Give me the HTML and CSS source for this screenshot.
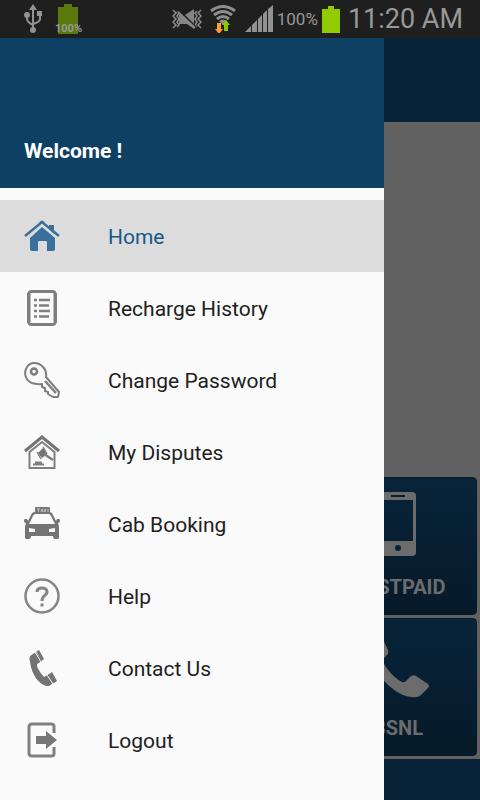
FILE: index.html
```html
<!DOCTYPE html>
<html lang="en">
<head>
<meta charset="utf-8">
<meta name="viewport" content="width=device-width, initial-scale=1">
<title>Home</title>
<link rel="stylesheet" href="styles.css">
</head>
<body>
<div class="screen">
  <div class="status">
    <svg class="usb" width="20" height="32" viewBox="0 0 20 32" fill="none" stroke="#929292" stroke-width="2">
      <path d="M10 6v21M4 13v3q0 3 6 6M17 11v5q0 3-7 5"/>
      <path d="M10 1l4 6H6zM14 8h5v5h-5z" fill="#929292" stroke="none"/>
      <circle cx="4" cy="12" r="3" fill="#929292" stroke="none"/><circle cx="10" cy="27" r="3" fill="#929292" stroke="none"/>
    </svg>
    <span class="charge">
      <svg width="20" height="30" viewBox="0 0 20 30"><path d="M6 0h8v3h6v27H0V3h6z" fill="#5a7a0c"/></svg>
      <span class="charge-label">100%</span>
    </span>
    <svg class="mute" width="32" height="24" viewBox="0 0 32 24" fill="none" stroke="#8a8a8a" stroke-width="2">
      <path d="M2 3l3 3-3 3 3 3-3 3 3 3-3 3M6 4l2 2-2 3 2 3-2 3 2 3-2 2M30 3l-3 3 3 3-3 3 3 3-3 3 3 3M26 4l-2 2 2 3-2 3 2 3-2 3 2 2" stroke-width="1.5"/>
      <path d="M8 8h6l9-6v20l-7-5H8z" fill="#858585" stroke="none"/>
      <path d="M6 2l19 19" stroke="#1f1f1f" stroke-width="3"/><path d="M7 5l17 16"/>
    </svg>
    <svg class="wifi" width="26" height="28" viewBox="0 0 26 28">
      <g fill="none" stroke="#8e8e8e" stroke-width="3"><path d="M1 6q12-9 24 0M4 10q9-7 18 0M7 14q6-5 12 0"/></g>
      <path d="M9 16q4-3 8 0l-4 4z" fill="#8e8e8e"/>
      <path d="M7 18h4v6h2l-4 5-4-5h2z" fill="#ff9c33"/>
      <path d="M14 26v-6h-2l4-5 4 5h-2v6z" fill="#8cc800"/>
    </svg>
    <svg class="signal" width="28" height="28" viewBox="0 0 28 28"><path d="M0 27l6-6v6zM7 20l5-5v12H7zM13 14l4-4v17h-4zM18 9l4-4v22h-4zM23 4l5-4v27h-5z" fill="#929292"/></svg>
    <span class="percent">100%</span>
    <svg class="battery" width="18" height="27" viewBox="0 0 18 27"><path d="M6 0h6v3h6v24H0V3h6z" fill="#90cc00"/></svg>
    <time class="clock">11:20 AM</time>
  </div>
  <div class="stage">
    <main class="page">
      <div class="toolbar"></div>
      <div class="banner"></div>
      <div class="tiles">
        <button class="tile" type="button">
          <svg width="36" height="66" viewBox="0 0 36 66"><path fill-rule="evenodd" d="M4 0h28q4 0 4 4v56q0 4-4 4H4q-4 0-4-4V4q0-4 4-4zM3 8v41h30V8z" fill="#6c6c6c"/><path d="M11 3h14v2H11z" fill="#082338"/><circle cx="18" cy="56" r="3" fill="#082338"/></svg>
          <span>POSTPAID</span>
        </button>
        <button class="tile" type="button">
          <svg width="64" height="66" viewBox="0 0 64 66"><path d="M3 9L10 2q3-3 5 0l7 15q1 3-1 5l-4 4q-1 2 1 5 8 13 18 18 2 1 4-1l4-4q3-3 6-1l12 8q2 2 0 4l-7 7q-3 3-10 2Q29 62 13 42 1 27 0 17q0-5 3-8z" fill="#6c6c6c"/></svg>
          <span>BSNL</span>
        </button>
      </div>
      <div class="bottom"></div>
    </main>
    <aside class="drawer">
      <header class="welcome">Welcome !</header>
      <nav class="menu">
        <a class="item active" href="#home">
          <svg viewBox="0 0 36 36"><path d="M6 20L18 9l13 11v11q0 2-2 2h-6v-9q0-1-1-1h-7q-1 0-1 1v9H8q-2 0-2-2z" fill="#3a719c"/><path d="M25 7h5v9l-5-5z" fill="#3a719c"/><path d="M1 18L18 4l17 14" fill="none" stroke="#3a719c" stroke-width="2.500"/><path d="M15 5q3-5 6 0z" fill="#3a719c"/></svg>
          <span>Home</span></a>
        <a class="item" href="#history">
          <svg viewBox="0 0 36 36" fill="none" stroke="#7e7e7e"><rect x="4.500" y="1.500" width="27" height="33" rx="3" stroke-width="3"/><path d="M5 4v28M31 4v28" stroke-width="3"/><path d="M10 10h3M10 15.500h3M10 21h3M10 26.500h3M15 10h11M15 15.500h10M15 21h11M15 26.500h10" stroke-width="2.500"/></svg>
          <span>Recharge History</span></a>
        <a class="item" href="#password">
          <svg viewBox="0 0 36 36" fill="none" stroke="#7e7e7e" stroke-width="2" stroke-linejoin="round"><path d="M22 15q1-6-3-10C14-.5 6 0 3 5c-4 6-1 14 5 16 4 1 6 2 10 1v3l3 1v3l3 1v2l5 3h5l1-5z"/><circle cx="10" cy="9.500" r="3" stroke-width="2.500"/><path d="M21 19l11 12" stroke-width="2.500"/></svg>
          <span>Change Password</span></a>
        <a class="item" href="#disputes">
          <svg viewBox="0 0 36 36" fill="none" stroke="#7e7e7e"><path d="M1 17L18 3l17 14" stroke="#747474" stroke-width="3"/><path d="M5.500 18v16h25V18L18 8z" stroke-width="2"/><path d="M14 19l5-5 4 6-5 4z" fill="#747474" stroke="none"/><path d="M13 18l4 7M19 13l4 7" stroke-width="1.500"/><path d="M20 20l9 6" stroke-width="2.500"/><path d="M9 30.500h11M11 28.500h7" stroke-width="2"/></svg>
          <span>My Disputes</span></a>
        <a class="item" href="#cab">
          <svg viewBox="0 0 36 36"><path d="M12 1h13q1 0 1 1v5H11V2q0-1 1-1z" fill="#777"/><path d="M13 3h3M14.500 3v3M17 6l1-3 1 3M20 3l2 3M22 3l-2 3M24 3v3" fill="none" stroke="#d8d8d8" stroke-width=".7"/><path fill-rule="evenodd" d="M11 6h14q3 0 4 3l3 6 1-2h2q1 0 1 2t-2 2q1 2 1 5v9q0 2-1 2h-3q-2 0-2-3H7q0 3-2 3H2q-1 0-1-2v-9q0-3 1-5-2 0-2-2t1-2h2l1 2 3-6q1-3 4-3zM11 8q-1 0-2 2l-4 8h26l-4-8q-1-2-2-2zM5 22v4h6v-3zM31 22v4h-6v-3z" fill="#747474"/></svg>
          <span>Cab Booking</span></a>
        <a class="item" href="#help">
          <svg viewBox="0 0 36 36" fill="none" stroke="#858585"><circle cx="18" cy="18" r="16.500" stroke-width="2.500"/><path d="M13 14q0-4 5-4t5 4q0 2-3 4-2 2-2 5M18 25.500v3" stroke-width="3"/></svg>
          <span>Help</span></a>
        <a class="item" href="#contact">
          <svg viewBox="0 0 36 36" fill="#747474"><path d="M6 6l6-4 6 9-5 3q-1 4 7 13l5-3 6 8-6 4h-3Q9 31 6 12q-1-4 0-6z"/><path d="M11 2l6 10M23 25l6 9" stroke="#fafafa" stroke-width="1"/><path d="M12.500 1.500L15 0l5 9-2.500 2zM25 24l3-2 5 9-3 2z"/></svg>
          <span>Contact Us</span></a>
        <a class="item" href="#logout">
          <svg viewBox="0 0 36 36"><path d="M30 11V4q0-2-3-2H8Q5 2 5 5v26q0 3 3 3h19q3 0 3-2v-7" fill="none" stroke="#808080" stroke-width="3"/><path d="M12 14h10V9l11 9-11 9v-5H12z" fill="#777"/></svg>
          <span>Logout</span></a>
      </nav>
    </aside>
  </div>
</div>
</body>
</html>
```
FILE: styles.css
```css
* { box-sizing: border-box; }

body {
  margin: 0;
  font-family: Roboto, "Liberation Sans", sans-serif;
}

.screen {
  display: flex;
  flex-direction: column;
  min-height: 100vh;
}

.status {
  display: flex;
  align-items: center;
  height: 38px;
  padding: 0 17px 0 23px;
  background: #1f1f1f;
  color: #989898;
}

.charge {
  position: relative;
  display: flex;
  margin-left: 15px;
}

.charge-label {
  position: absolute;
  bottom: 0;
  left: -3px;
  font-size: 11px;
  font-weight: 700;
  line-height: 10px;
}

.mute { margin-left: auto; }
.wifi { margin-left: 7px; }
.signal { margin-left: 9px; }

.percent {
  margin-left: 4px;
  font-size: 17px;
}

.battery { margin-left: 4px; }

.clock {
  margin-left: 8px;
  font-size: 27px;
}

.stage {
  position: relative;
  display: flex;
  flex: 1;
}

.page {
  display: flex;
  flex: 1;
  flex-direction: column;
  background: #616161;
}

.toolbar {
  height: 84px;
  background: #082338;
}

.banner { flex: 1; }

.tiles {
  display: grid;
  grid-template-columns: repeat(3, 1fr);
  gap: 3px;
  padding: 3px;
}

.tile {
  display: flex;
  flex-direction: column;
  grid-column: 3;
  align-items: center;
  justify-content: space-between;
  height: 138px;
  padding: 14px 2px 15px 0;
  border: 1px solid #051a2a;
  border-radius: 4px;
  background: linear-gradient(#08243a, #061a29);
  color: #6c6c6c;
  font: 700 20px/24px Roboto, sans-serif;
}

.bottom {
  height: 41px;
  background: #082338;
}

.drawer {
  position: absolute;
  inset: 0 auto 0 0;
  width: 80%;
  background: #fafafa;
}

.welcome {
  display: flex;
  align-items: flex-end;
  height: 150px;
  padding: 23px 24px;
  background: #0e4064;
  color: #fff;
  font-size: 21px;
  font-weight: 700;
  line-height: 27px;
}

.menu { padding-top: 12px; }

.item {
  display: flex;
  align-items: center;
  gap: 48px;
  height: 72px;
  padding: 0 24px;
  color: #212121;
  font-size: 21px;
  line-height: 28px;
  text-decoration: none;
}

.item svg {
  width: 36px;
  height: 36px;
}

.item span { padding-top: 2px; }

.active {
  background: #dcdcdc;
  color: #17588a;
}
```
